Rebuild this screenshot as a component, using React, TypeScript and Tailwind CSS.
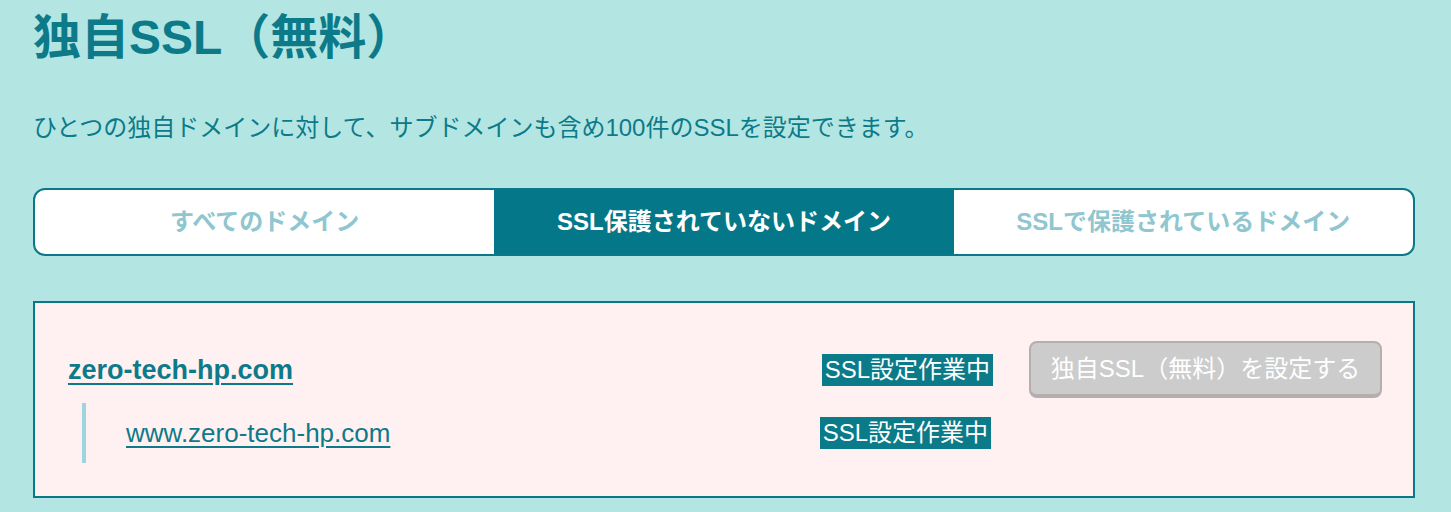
import React from "react";

const FONT = { fontFamily: '"Liberation Sans", "Noto Sans CJK JP", sans-serif' };

export default function App() {
  return (
    <div className="min-h-[512px] w-full bg-[#b3e6e3] px-[33px] pr-[36px]" style={FONT}>
      <h1 className="pt-[14px] text-[48px] font-bold leading-[48px] text-[#0d7a89]">独自SSL（無料）</h1>
      <p className="mt-[48px] text-[24px] leading-[36px] text-[#0d7a89]">
        ひとつの独自ドメインに対して、サブドメインも含め100件のSSLを設定できます。
      </p>

      <div className="mt-[42px] grid h-[68px] grid-cols-3 overflow-hidden rounded-[12px] border-2 border-[#0a7888] bg-white">
        <button className="flex items-center justify-center text-[24px] font-bold text-[#8fc6cf]">すべてのドメイン</button>
        <button className="flex items-center justify-center bg-[#047888] text-[24px] font-bold text-white">
          SSL保護されていないドメイン
        </button>
        <button className="flex items-center justify-center text-[24px] font-bold text-[#8fc6cf]">
          SSLで保護されているドメイン
        </button>
      </div>

      <div className="mt-[45px] border-2 border-[#0a7888] bg-[#fff1f1] pb-[33px] pl-[33px] pr-[31px] pt-[38px]">
        <div className="flex items-center">
          <a className="flex-1 text-[27px] font-bold leading-[30px] text-[#0d7a89] underline decoration-2 underline-offset-[4px]">
            zero-tech-hp.com
          </a>
          <span className="bg-[#0b7b89] px-[3px] text-[24px] leading-[32px] text-white">SSL設定作業中</span>
          <button className="ml-[36px] h-[57px] w-[353px] rounded-[8px] border-2 border-b-[4px] border-[#b5aeae] bg-[#cccccc] text-[24px] text-white">
            独自SSL（無料）を設定する
          </button>
        </div>
        <div className="ml-[14px] mt-[5px] flex h-[60px] items-center border-l-4 border-[#9fd3dd] pl-[40px]">
          <a className="flex-1 text-[26px] leading-[30px] text-[#0d7a89] underline underline-offset-[4px]">
            www.zero-tech-hp.com
          </a>
          <span className="bg-[#0b7b89] px-[3px] text-[24px] leading-[32px] text-white">SSL設定作業中</span>
          <div className="w-[391px]" />
        </div>
      </div>
    </div>
  );
}
